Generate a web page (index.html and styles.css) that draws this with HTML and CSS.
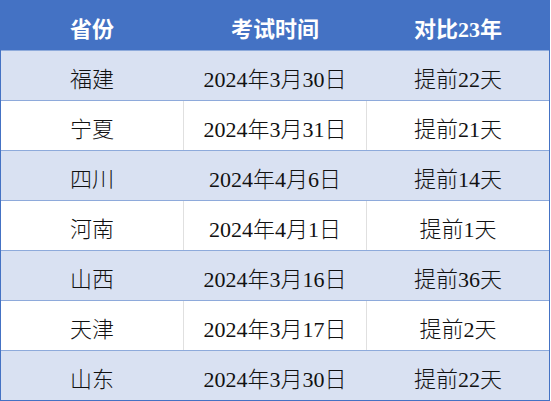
FILE: index.html
```html
<!DOCTYPE html>
<html lang="zh-CN">
<head>
<meta charset="utf-8">
<title>考试时间</title>
<link rel="stylesheet" href="styles.css">
</head>
<body>
<div class="table">
  <div class="row head">
    <div class="cell">省份</div>
    <div class="cell">考试时间</div>
    <div class="cell">对比23年</div>
  </div>
  <div class="row shade">
    <div class="cell">福建</div>
    <div class="cell">2024年3月30日</div>
    <div class="cell">提前22天</div>
  </div>
  <div class="row plain">
    <div class="cell">宁夏</div>
    <div class="cell">2024年3月31日</div>
    <div class="cell">提前21天</div>
  </div>
  <div class="row shade">
    <div class="cell">四川</div>
    <div class="cell">2024年4月6日</div>
    <div class="cell">提前14天</div>
  </div>
  <div class="row plain">
    <div class="cell">河南</div>
    <div class="cell">2024年4月1日</div>
    <div class="cell">提前1天</div>
  </div>
  <div class="row shade">
    <div class="cell">山西</div>
    <div class="cell">2024年3月16日</div>
    <div class="cell">提前36天</div>
  </div>
  <div class="row plain">
    <div class="cell">天津</div>
    <div class="cell">2024年3月17日</div>
    <div class="cell">提前2天</div>
  </div>
  <div class="row shade last">
    <div class="cell">山东</div>
    <div class="cell">2024年3月30日</div>
    <div class="cell">提前22天</div>
  </div>
</div>
</body>
</html>
```

FILE: styles.css
```css
html, body {
  margin: 0;
  padding: 0;
  background: #ffffff;
}

.table {
  width: 550px;
  box-sizing: border-box;
  border-left: 1px solid #4472c4;
  border-right: 1px solid #4472c4;
  font-family: "Liberation Serif", "Noto Sans CJK SC", serif;
  font-size: 22px;
  font-weight: 300;
  color: #111111;
}

.row {
  display: flex;
  height: 50px;
  box-sizing: border-box;
  border-bottom: 1px solid #8eaadb;
}

.row.head {
  height: 51px;
  background: #4472c4;
  color: #ffffff;
  font-weight: 700;
}

.row.shade {
  background: #d9e1f2;
}

.row.plain {
  background: #ffffff;
}

.row.last {
  border-bottom-color: #4472c4;
}

.cell {
  flex: 0 0 182px;
  display: flex;
  align-items: center;
  justify-content: center;
  padding-top: 3px;
  box-sizing: border-box;
}

.cell + .cell {
  margin-left: 1px;
}

.plain .cell + .cell {
  margin-left: 0;
  flex-basis: 183px;
  border-left: 1px solid #e0e0e0;
}
```
